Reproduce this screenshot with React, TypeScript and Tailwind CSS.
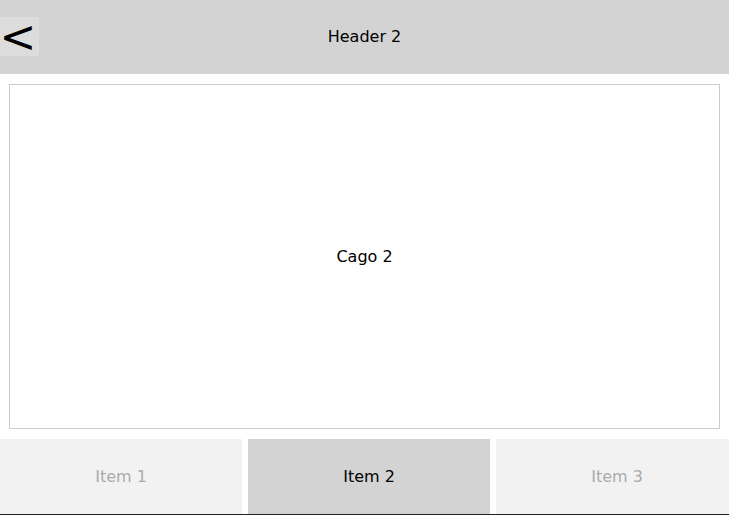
export default function App() {
  const tabs = ["Item 1", "Item 2", "Item 3"];
  const active = 1;

  return (
    <div className="flex h-[515px] w-[729px] flex-col overflow-hidden bg-white font-['DejaVu_Sans',sans-serif] text-[16px] text-black">
      {/* Header */}
      <div className="relative flex h-[74px] shrink-0 items-center justify-center bg-[#d3d3d3]">
        <button className="absolute left-0 top-[17px] flex h-[39px] w-[39px] items-center justify-center overflow-visible bg-[#dcdcdc] pr-[3px] pt-[1px] text-[44px] leading-none">
          &lt;
        </button>
        <span>Header 2</span>
      </div>

      {/* Content */}
      <div className="mx-[9px] mt-[10px] flex h-[345px] shrink-0 items-center justify-center border border-[#cccccc]">
        <span>Cago 2</span>
      </div>

      {/* Tab bar */}
      <div className="mt-[10px] flex h-[75px] shrink-0 gap-[6px] overflow-hidden">
        {tabs.map((t, i) => (
          <div
            key={t}
            className={
              i === active
                ? "flex w-[242px] shrink-0 items-center justify-center bg-[#d3d3d3] text-black"
                : "flex w-[242px] shrink-0 items-center justify-center bg-[#f2f2f2] text-[#aaaaaa]"
            }
          >
            {t}
          </div>
        ))}
      </div>
      <div className="h-px shrink-0 bg-[#222222]" />
    </div>
  );
}
